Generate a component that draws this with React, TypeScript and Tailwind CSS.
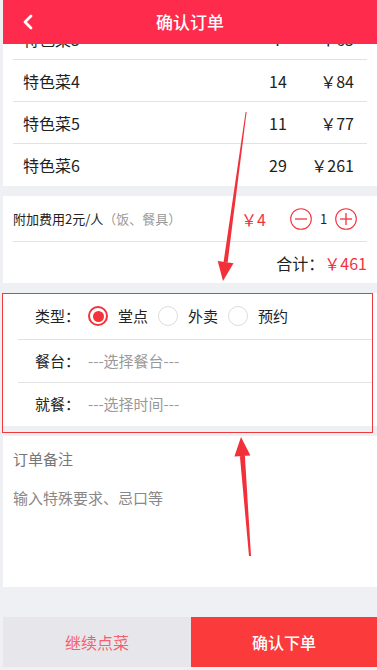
import React from "react";

const F = { fontFamily: '"Noto Sans CJK SC", "Noto Sans", sans-serif' };

function DishRow({ name, qty, price, last }: { name: string; qty: string; price: string; last?: boolean }) {
  return (
    <div className={`h-[42px] shrink-0 mx-[10px] flex items-center pl-[10px] pr-[13px] text-[16px] text-[#222] ${last ? "" : "border-b border-[#e2e2e4]"}`}>
      <div className="flex-1">{name}</div>
      <div className="w-[40px] text-center">{qty}</div>
      <div className="w-[56px] text-right">{price}</div>
    </div>
  );
}

function Radio({ checked }: { checked?: boolean }) {
  return checked ? (
    <span className="w-[20px] h-[20px] rounded-full border-[2px] border-[#f4323c] flex items-center justify-center">
      <span className="w-[11px] h-[11px] rounded-full bg-[#f4323c]" />
    </span>
  ) : (
    <span className="w-[20px] h-[20px] rounded-full border border-[#dcdcdc] bg-white" />
  );
}

export default function App() {
  return (
    <div className="relative w-[377px] h-[670px] bg-[#eef0f4] overflow-hidden" style={F}>
      <div className="ml-[3px] w-[374px] flex flex-col">
        {/* header */}
        <div className="relative z-10 h-[44px] bg-[#fe2b4c] flex items-center justify-center">
          <svg className="absolute left-[18px] top-[14px]" width="14" height="16" viewBox="0 0 14 16">
            <path d="M10 2 L4 8 L10 14" fill="none" stroke="#fff" strokeWidth="2.8" strokeLinecap="round" strokeLinejoin="round" />
          </svg>
          <span className="text-white text-[17px] font-medium">确认订单</span>
        </div>

        {/* dish list */}
        <div className="bg-white">
          <div className="h-[16px] overflow-hidden flex flex-col justify-end">
            <DishRow name="特色菜3" qty="7" price="￥63" />
          </div>
          <DishRow name="特色菜4" qty="14" price="￥84" />
          <DishRow name="特色菜5" qty="11" price="￥77" />
          <DishRow name="特色菜6" qty="29" price="￥261" last />
        </div>

        <div className="h-[10px]" />

        {/* extra fee */}
        <div className="bg-white">
          <div className="h-[46px] mx-[10px] border-b border-[#e2e2e4] flex items-center">
            <div className="text-[13px] text-[#222] w-[228px]">
              附加费用2元/人<span className="text-[#999]">（饭、餐具）</span>
            </div>
            <div className="text-[16px] text-[#f4323c] w-[49px]">￥4</div>
            <svg width="22" height="22" viewBox="0 0 22 22">
              <circle cx="11" cy="11" r="10.3" fill="none" stroke="#f4323c" strokeWidth="1.1" />
              <line x1="5" y1="11" x2="17" y2="11" stroke="#f4323c" strokeWidth="1.3" />
            </svg>
            <div className="w-[23px] text-center text-[13px] text-[#222]">1</div>
            <svg width="22" height="22" viewBox="0 0 22 22">
              <circle cx="11" cy="11" r="10.3" fill="none" stroke="#f4323c" strokeWidth="1.1" />
              <line x1="5" y1="11" x2="17" y2="11" stroke="#f4323c" strokeWidth="1.3" />
              <line x1="11" y1="5" x2="11" y2="17" stroke="#f4323c" strokeWidth="1.3" />
            </svg>
          </div>
          <div className="h-[41px] flex items-center justify-end pr-[10px] text-[16px]">
            <span className="text-[#222]">合计：</span>
            <span className="text-[#f4323c]">￥461</span>
          </div>
        </div>

        <div className="h-[10px]" />

        {/* type / table / time */}
        <div className="bg-white h-[133px]">
          <div className="h-[47px] ml-[15px] mr-[5px] border-b border-[#e2e2e4] flex items-center pl-[17px] text-[15px] text-[#222]">
            <span className="w-[53px]">类型：</span>
            <Radio checked />
            <span className="ml-[10px] w-[40px]">堂点</span>
            <Radio />
            <span className="ml-[10px] w-[40px]">外卖</span>
            <Radio />
            <span className="ml-[10px]">预约</span>
          </div>
          <div className="h-[43px] ml-[15px] mr-[5px] border-b border-[#e2e2e4] flex items-center pl-[17px] text-[15px]">
            <span className="w-[53px] text-[#222]">餐台：</span>
            <span className="text-[#999]">---选择餐台---</span>
          </div>
          <div className="h-[43px] ml-[15px] mr-[5px] flex items-center pl-[17px] text-[15px]">
            <span className="w-[53px] text-[#222]">就餐：</span>
            <span className="text-[#999]">---选择时间---</span>
          </div>
        </div>

        <div className="h-[10px]" />

        {/* remark */}
        <div className="bg-white h-[151px] px-[10px] pt-[11px] text-[15px]">
          <div className="text-[#777] leading-[24px]">订单备注</div>
          <div className="text-[#888] leading-[24px] mt-[15px]">输入特殊要求、忌口等</div>
        </div>

        <div className="h-[30px]" />

        {/* bottom bar */}
        <div className="h-[50px] flex">
          <div className="w-[188px] bg-[#e7e7eb] flex items-center justify-center text-[16px] text-[#f5606e]">继续点菜</div>
          <div className="flex-1 bg-[#fb3a3c] flex items-center justify-center text-[16px] text-white font-medium">确认下单</div>
        </div>
      </div>

      {/* annotations */}
      <div className="absolute left-[2px] top-[293px] w-[371px] h-[140px] border-[1.5px] border-[#f0393c] pointer-events-none" />
      <svg className="absolute left-0 top-0 pointer-events-none" width="377" height="670" viewBox="0 0 377 670">
        <polygon points="245.6,112 246.6,112 227.6,262.5 223.6,261.9" fill="#f2303a" />
        <polygon points="233.5,263.3 217.7,261.1 223,281" fill="#f2303a" />
        <polygon points="251,556 249,556 239.9,456.2 244.9,455.8" fill="#f2303a" />
        <polygon points="250.4,455.4 234.4,456.6 241,437" fill="#f2303a" />
      </svg>
    </div>
  );
}
